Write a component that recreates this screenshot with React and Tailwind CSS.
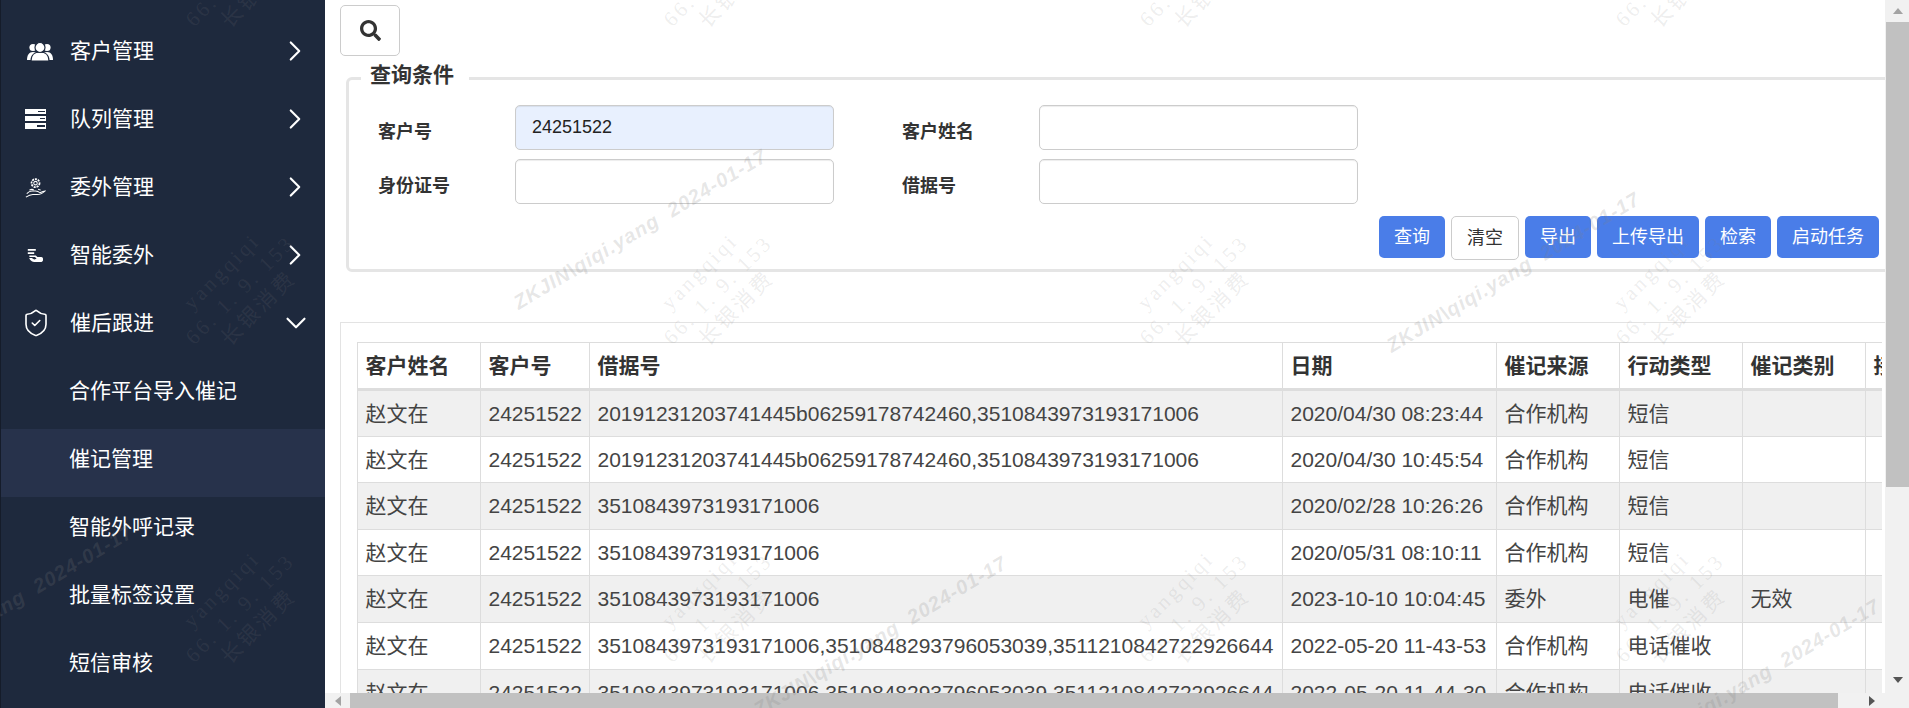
import { ChevronRight, ChevronDown, ShieldCheck } from 'lucide-react';
import { FaSearch } from 'react-icons/fa';

const FONT = '"Liberation Sans","Noto Sans CJK SC",sans-serif';

function UsersIcon() {
  return (
    <svg width="26" height="19" viewBox="0 0 26 19" fill="#fff">
      <circle cx="6" cy="5.5" r="3.6" />
      <circle cx="20" cy="5.5" r="3.6" />
      <path d="M0 18c0-5 2-8 6-8s6 3 6 8zM14 18c0-5 2-8 6-8s6 3 6 8z" />
      <path d="M4 19c0-6 4-9 9-9s9 3 9 9z" stroke="#1e293d" strokeWidth="1.2" />
      <circle cx="13" cy="5.5" r="5" stroke="#1e293d" strokeWidth="1.2" />
    </svg>
  );
}

function QueueIcon() {
  return (
    <svg width="21" height="20" viewBox="0 0 21 20" fill="#fff">
      <path d="M0 0h21v5h-8V3h7V2h-7v3H0zM0 7h21v5h-6v-2h5V9h-5v3H0zM0 14h21v6H0zM12 16v2h8v-2z" fillRule="evenodd" />
    </svg>
  );
}

function FlowerHandIcon() {
  return (
    <svg width="21" height="21" viewBox="0 0 24 24" fill="none" stroke="#fff" strokeWidth="1.2">
      <circle cx="12" cy="7" r="2" />
      <circle cx="12" cy="7" r="4.6" strokeDasharray="2.4 1" strokeWidth="2" />
      <path d="M1 23c3-2 5-3 8-3h5c3 0 7-2 9-4-2 0-4 1-6 2-1-1-3-2-5-2H8c-2 0-4 1-6 3" />
      <path d="M5 15c2-1 4-1 5 0M15 14l3 1" />
    </svg>
  );
}

function HandListIcon() {
  return (
    <svg width="16" height="13" viewBox="0 0 20 16" fill="#fff">
      <path d="M1 0h10v2H1zM1 4h8v2H1zM3 8h8l2 2h5c1 0 2 1 2 2v2c0 1-1 2-2 2H9c-2 0-4-1-6-4v-1h3l3 2 3-1-2-2H3z" />
    </svg>
  );
}

const menus = [
  { label: '客户管理', icon: <UsersIcon />, pad: 'pl-[26px]' },
  { label: '队列管理', icon: <QueueIcon />, pad: 'pl-[24px]' },
  { label: '委外管理', icon: <FlowerHandIcon />, pad: 'pl-[24px]' },
  { label: '智能委外', icon: <HandListIcon />, pad: 'pl-[26px]' },
  { label: '催后跟进', icon: <ShieldCheck size={30} color="#fff" strokeWidth={1.3} />, pad: 'pl-[20px]', open: true },
];

const subMenus = ['合作平台导入催记', '催记管理', '智能外呼记录', '批量标签设置', '短信审核'];

const loan1 = '20191231203741445b06259178742460,3510843973193171006';
const loan2 = '3510843973193171006';
const loan3 = '3510843973193171006,3510848293796053039,3511210842722926644';

const rows = [
  [loan1, '2020/04/30 08:23:44', '合作机构', '短信', ''],
  [loan1, '2020/04/30 10:45:54', '合作机构', '短信', ''],
  [loan2, '2020/02/28 10:26:26', '合作机构', '短信', ''],
  [loan2, '2020/05/31 08:10:11', '合作机构', '短信', ''],
  [loan2, '2023-10-10 10:04:45', '委外', '电催', '无效'],
  [loan3, '2022-05-20 11-43-53', '合作机构', '电话催收', ''],
  [loan3, '2022-05-20 11-44-30', '合作机构', '电话催收', ''],
];

const identityX = [240, 718, 1194, 1670];
const identityY = [-28, 290, 608];

const userMarks = [
  [640, 229], [1513, 272], [880, 636], [1753, 679], [6, 605],
];

function Sidebar() {
  return (
    <aside className="w-[325px] shrink-0 bg-[#1e293d] border-l border-[#151c2a] text-[21px] text-white pt-[17px]">
      {menus.map((m) => (
        <div key={m.label} className="h-[68px] flex items-center">
          <span className={`w-[69px] flex shrink-0 ${m.pad}`}>{m.icon}</span>
          <span className="flex-1">{m.label}</span>
          {m.open
            ? <ChevronDown size={34} strokeWidth={1.5} className="mr-[12px]" />
            : <ChevronRight size={34} strokeWidth={1.5} className="mr-[13px]" />}
        </div>
      ))}
      <div className="pt-[4px]">
        {subMenus.map((s) => (
          <div key={s} className={`h-[68px] flex items-center pl-[68px] pb-[8px] ${s === '催记管理' ? 'bg-[#27324b]' : ''}`}>
            {s}
          </div>
        ))}
      </div>
    </aside>
  );
}

function Field({ label, value }) {
  return (
    <div className="flex items-center">
      <label className="w-[160px] pl-[23px] text-[18px] font-bold text-[#333] pt-[10px]">{label}</label>
      <input
        readOnly
        value={value || ''}
        className={`w-[319px] h-[45px] rounded-[5px] border border-[#ccc] px-[16px] text-[18px] text-[#222] outline-none shadow-[inset_0_1px_1px_rgba(0,0,0,0.075)] ${value ? 'bg-[#e8f0fe]' : 'bg-white'}`}
      />
    </div>
  );
}

function Btn({ children }) {
  return <button className="h-[42px] px-[15px] rounded-[5px] bg-[#4a7de8] text-white text-[18px]">{children}</button>;
}

function QueryPanel() {
  return (
    <fieldset className="mt-[5px] ml-[21px] mr-[-20px] border-[3px] border-[#e5e5e5] rounded-[6px] px-[6px] h-[211px] shrink-0">
      <legend className="ml-[6px] pl-[9px] pr-[15px] pb-[6px] text-[21px] font-bold text-[#333] leading-[28px]">查询条件</legend>
      <div className="grid grid-cols-[524px_1fr] gap-y-[9px] mt-[10px]">
        <Field label="客户号" value="24251522" />
        <Field label="客户姓名" />
        <Field label="身份证号" />
        <Field label="借据号" />
      </div>
      <div className="flex justify-end items-start gap-[6px] mt-[12px] mr-[17px]">
        <Btn>查询</Btn>
        <button className="h-[44px] px-[15px] rounded-[5px] border border-[#ccc] bg-white text-[#333] text-[18px]">清空</button>
        <Btn>导出</Btn>
        <Btn>上传导出</Btn>
        <Btn>检索</Btn>
        <Btn>启动任务</Btn>
      </div>
    </fieldset>
  );
}

function DataTable() {
  const th = 'border border-[#ddd] border-b-[3px] px-[7.5px] text-left font-bold text-[#333] whitespace-nowrap overflow-hidden';
  const td = 'border border-[#ddd] px-[7.5px] whitespace-nowrap overflow-hidden';
  return (
    <div className="mt-[50px] ml-[15px] border-t border-l border-[#e3e3e3] pt-[19px] pl-[16px] flex-1 min-h-0">
      <div className="h-[400px] mr-[3px] overflow-hidden">
        <table className="table-fixed border-collapse w-[1570px] text-[21px] text-[#444]">
          <colgroup>
            <col className="w-[123px]" />
            <col className="w-[109px]" />
            <col className="w-[693px]" />
            <col className="w-[214px]" />
            <col className="w-[123px]" />
            <col className="w-[123px]" />
            <col className="w-[123px]" />
            <col className="w-[62px]" />
          </colgroup>
          <thead>
            <tr className="h-[47px]">
              {['客户姓名', '客户号', '借据号', '日期', '催记来源', '行动类型', '催记类别', '接触'].map((h) => (
                <th key={h} className={th}>{h}</th>
              ))}
            </tr>
          </thead>
          <tbody>
            {rows.map((r, i) => (
              <tr key={i} className={`h-[46.6px] ${i % 2 === 0 ? 'bg-[#f0f0f0]' : 'bg-white'}`}>
                <td className={td}>赵文在</td>
                <td className={td}>24251522</td>
                {r.map((c, j) => <td key={j} className={td}>{c}</td>)}
                <td className={td}></td>
              </tr>
            ))}
          </tbody>
        </table>
      </div>
    </div>
  );
}

function Watermarks() {
  return (
    <div className="absolute inset-0 pointer-events-none overflow-hidden">
      {identityX.flatMap((x) => identityY.map((y) => (
        <div
          key={`${x}-${y}`}
          className="absolute -translate-x-1/2 -translate-y-1/2 -rotate-45 text-center text-[21px] leading-[26px] tracking-[3px] whitespace-pre text-[#80808026]"
          style={{ left: x, top: y, fontFamily: '"Liberation Serif","Noto Sans CJK SC",serif' }}
        >
          <div>yangqiqi</div>
          <div>66. 1. 9. 153</div>
          <div>长银消费</div>
        </div>
      )))}
      {userMarks.map(([x, y]) => (
        <div
          key={`${x}-${y}`}
          className="absolute -translate-x-1/2 -translate-y-1/2 -rotate-[31deg] text-[20px] font-bold italic tracking-[1px] whitespace-pre text-[#80808033]"
          style={{ left: x, top: y }}
        >
          {'ZKJIN\\qiqi.yang  2024-01-17'}
        </div>
      ))}
    </div>
  );
}

export default function App() {
  return (
    <div className="relative flex h-[708px] w-[1909px] overflow-hidden bg-white" style={{ fontFamily: FONT }}>
      <Sidebar />
      <div className="flex-1 flex min-w-0">
        <div className="flex-1 min-w-0 flex flex-col">
          <div className="flex-1 min-h-0 flex flex-col overflow-hidden">
            <button className="mt-[5px] ml-[15px] w-[60px] h-[51px] shrink-0 flex items-center justify-center rounded-[5px] border border-[#ccc] text-[#333]">
              <FaSearch size={21} />
            </button>
            <QueryPanel />
            <DataTable />
          </div>
          <div className="h-[15px] shrink-0 bg-[#f1f1f1] flex items-center">
            <span className="w-[25px] flex justify-center shrink-0">
              <span className="border-y-[5px] border-r-[6px] border-y-transparent border-r-[#a3a3a3]" />
            </span>
            <div className="h-full w-[1488px] bg-[#c1c1c1]" />
            <span className="ml-[31px] border-y-[5px] border-l-[6px] border-y-transparent border-l-[#555]" />
          </div>
        </div>
        <div className="w-[24px] shrink-0 bg-[#f1f1f1] flex flex-col pl-[1px]">
          <div className="h-[22px] shrink-0 flex items-center justify-center">
            <span className="border-x-[5px] border-b-[6px] border-x-transparent border-b-[#a3a3a3]" />
          </div>
          <div className="h-[465px] bg-[#c1c1c1]" />
          <div className="flex-1" />
          <span className="mb-[25px] self-center border-x-[5px] border-t-[6px] border-x-transparent border-t-[#555]" />
        </div>
      </div>
      <Watermarks />
    </div>
  );
}
